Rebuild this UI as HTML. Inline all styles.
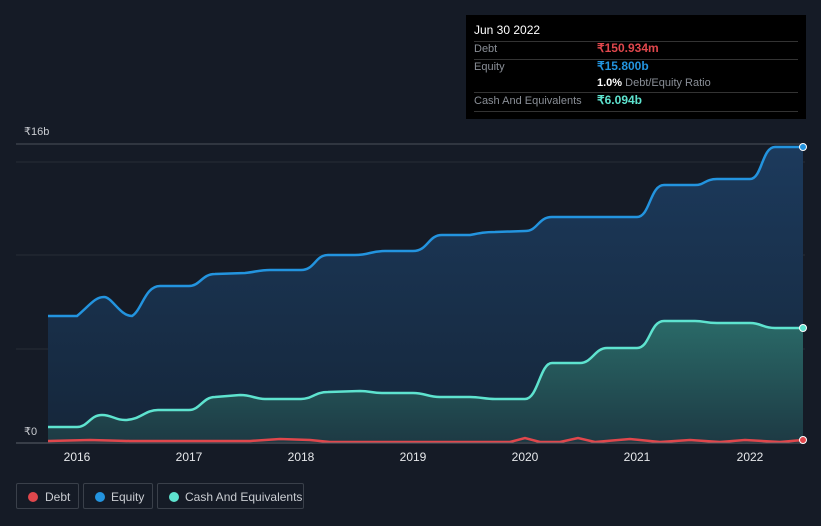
<!DOCTYPE html><html><head><style>
body{margin:0;width:821px;height:526px;background:#151b26;font-family:"Liberation Sans",sans-serif;overflow:hidden;position:relative}
.tt{position:absolute;left:466px;top:15px;width:340px;height:104px;background:#000;font-size:11px;color:#8a8f97}
.tt .l{position:absolute;left:8px;right:8px;height:1px;background:#333}
.tt span{position:absolute;line-height:13px}
.leg{position:absolute;top:483px;height:26px;border:1px solid #3a404a;border-radius:2px;color:#c9ccd1;font-size:12px;line-height:26px;box-sizing:border-box}
.leg i{position:absolute;left:11px;top:8px;width:10px;height:10px;border-radius:50%}
</style></head><body>
<svg width="821" height="526" style="position:absolute;left:0;top:0">
<defs><linearGradient id="g1" x1="0" y1="0" x2="0" y2="1"><stop offset="0" stop-color="#1c3a5c"/><stop offset="1" stop-color="#15263a"/></linearGradient>
<linearGradient id="g2" x1="0" y1="0" x2="0" y2="1"><stop offset="0" stop-color="#2a6a68"/><stop offset="1" stop-color="#1d3a44"/></linearGradient></defs>
<line x1="16" y1="144" x2="805" y2="144" stroke="#4a505a"/>
<line x1="16" y1="162" x2="805" y2="162" stroke="#262c37"/>
<line x1="16" y1="255" x2="805" y2="255" stroke="#262c37"/>
<line x1="16" y1="349" x2="805" y2="349" stroke="#262c37"/>
<path d="M48,316 L77,316 C90,305 95,297 104,297 C112,297 120,316 132,316 C142,310 145,286 160,286 L189,286 C200,286 202,274 215,274 L245,273 C255,272 260,270 270,270 L301,270 C315,270 315,255 328,255 L355,255 C370,255 370,251 385,251 L413,251 C428,251 428,235 442,235 L470,235 C480,233 485,232 495,232 L525,231 C538,231 538,217 552,217 L637,217 C650,217 650,185 664,185 L695,185 C705,185 705,179 717,179 L750,179 C762,179 762,147 775,147 L803,147 L803,442 L48,442 Z" fill="url(#g1)"/>
<path d="M48,316 L77,316 C90,305 95,297 104,297 C112,297 120,316 132,316 C142,310 145,286 160,286 L189,286 C200,286 202,274 215,274 L245,273 C255,272 260,270 270,270 L301,270 C315,270 315,255 328,255 L355,255 C370,255 370,251 385,251 L413,251 C428,251 428,235 442,235 L470,235 C480,233 485,232 495,232 L525,231 C538,231 538,217 552,217 L637,217 C650,217 650,185 664,185 L695,185 C705,185 705,179 717,179 L750,179 C762,179 762,147 775,147 L803,147" fill="none" stroke="#2394df" stroke-width="2.5"/>
<path d="M48,427 L77,427 C88,427 90,415 102,415 C112,415 115,420 125,420 C140,420 145,410 158,410 L189,410 C200,410 203,397 215,397 L240,395 C252,395 255,399 265,399 L301,399 C312,399 315,392 328,392 L360,391 C370,391 372,393 382,393 L413,393 C425,393 428,397 440,397 L470,397 C480,397 485,399 495,399 L525,399 C538,399 540,363 552,363 L580,363 C592,363 595,348 607,348 L637,348 C650,348 650,321 664,321 L695,321 C705,321 705,323 717,323 L750,323 C762,323 762,328 775,328 L803,328 L803,442 L48,442 Z" fill="url(#g2)"/>
<path d="M48,427 L77,427 C88,427 90,415 102,415 C112,415 115,420 125,420 C140,420 145,410 158,410 L189,410 C200,410 203,397 215,397 L240,395 C252,395 255,399 265,399 L301,399 C312,399 315,392 328,392 L360,391 C370,391 372,393 382,393 L413,393 C425,393 428,397 440,397 L470,397 C480,397 485,399 495,399 L525,399 C538,399 540,363 552,363 L580,363 C592,363 595,348 607,348 L637,348 C650,348 650,321 664,321 L695,321 C705,321 705,323 717,323 L750,323 C762,323 762,328 775,328 L803,328" fill="none" stroke="#5ee3cf" stroke-width="2.5"/>
<path d="M48,441 L90,440 L130,441 L250,441 L280,439 L310,440 L330,442 L510,442 L525,438 L540,442 L560,442 L578,438 L595,442 L630,439 L660,442 L690,440 L720,442 L745,440 L780,442 L803,440" fill="none" stroke="#e0474c" stroke-width="2.5"/>
<line x1="16" y1="443" x2="805" y2="443" stroke="#5a606a"/>
<circle cx="803" cy="147" r="3.5" fill="#2394df" stroke="#fff"/>
<circle cx="803" cy="328" r="3.5" fill="#5ee3cf" stroke="#fff"/>
<circle cx="803" cy="440" r="3.5" fill="#e0474c" stroke="#fff"/>
<g fill="#c9ccd1" font-size="11" font-family="Liberation Sans, sans-serif">
<text x="24" y="135">₹16b</text><text x="24" y="435">₹0</text>
<g text-anchor="middle" font-size="12" fill="#e6e8eb"><text x="77" y="461">2016</text><text x="189" y="461">2017</text><text x="301" y="461">2018</text><text x="413" y="461">2019</text><text x="525" y="461">2020</text><text x="637" y="461">2021</text><text x="750" y="461">2022</text></g>
</g></svg>
<div class="tt">
<span style="left:8px;top:9px;color:#fff;font-size:12px">Jun 30 2022</span>
<div class="l" style="top:26px"></div>
<span style="left:8px;top:28px">Debt</span><span style="left:131px;top:27px;color:#e0474c;font-weight:bold;font-size:12px">₹150.934m</span>
<div class="l" style="top:44px"></div>
<span style="left:8px;top:46px">Equity</span><span style="left:131px;top:45px;color:#2394df;font-weight:bold;font-size:12px">₹15.800b</span>
<span style="left:131px;top:62px"><b style="color:#fff">1.0%</b> Debt/Equity Ratio</span>
<div class="l" style="top:77px"></div>
<span style="left:8px;top:80px">Cash And Equivalents</span><span style="left:131px;top:79px;color:#5ee3cf;font-weight:bold;font-size:12px">₹6.094b</span>
<div class="l" style="top:96px"></div>
</div>
<div class="leg" style="left:16px;width:63px"><i style="background:#e0474c"></i><span style="position:absolute;left:28px">Debt</span></div>
<div class="leg" style="left:83px;width:70px"><i style="background:#2394df"></i><span style="position:absolute;left:27px">Equity</span></div>
<div class="leg" style="left:157px;width:147px"><i style="background:#5ee3cf"></i><span style="position:absolute;left:27px">Cash And Equivalents</span></div>
</body></html>
